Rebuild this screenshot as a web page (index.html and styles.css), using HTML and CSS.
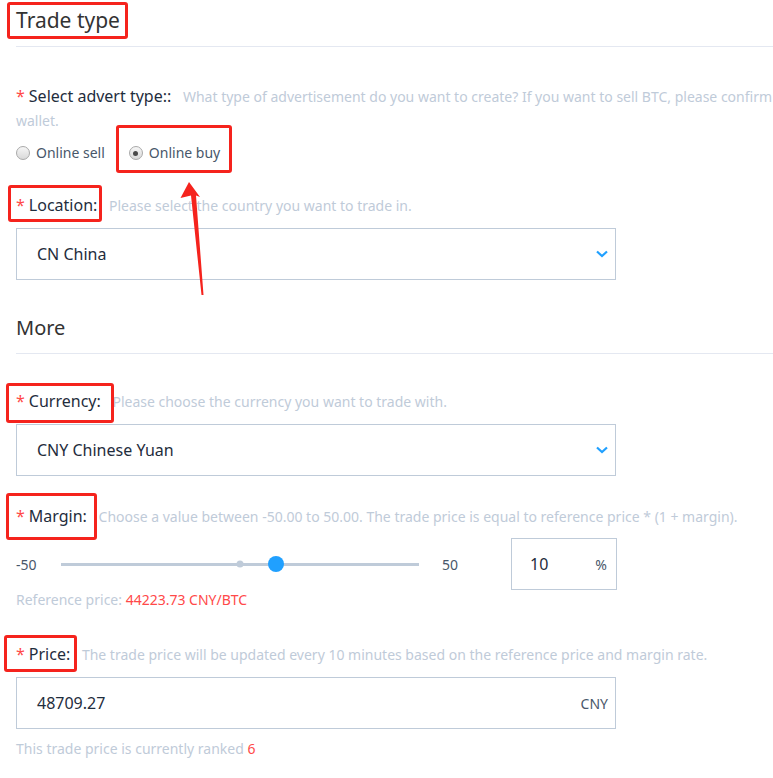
FILE: index.html
```html
<!DOCTYPE html>
<html lang="en">
<head>
    <meta charset="UTF-8">
    <meta name="viewport" content="width=device-width, initial-scale=1.0">
    <title>Create Advert</title>
    <link rel="stylesheet" href="styles.css">
</head>
<body>
    <div class="page">
        <div class="section-title">Trade type</div>

        <div class="form-item first">
            <div class="item-head">
                <span class="label"><i class="req">*</i>Select advert type::</span>
                <span class="hint">What type of advertisement do you want to create? If you want to sell BTC, please confirm that you have enough BTC in your<br>wallet.</span>
            </div>
            <div class="radios">
                <label class="radio"><span class="radio-dot"></span>Online sell</label>
                <label class="radio"><span class="radio-dot checked"></span>Online buy</label>
            </div>
        </div>

        <div class="form-item">
            <div class="item-head">
                <span class="label"><i class="req">*</i>Location:</span>
                <span class="hint">Please select the country you want to trade in.</span>
            </div>
            <div class="field">
                <span>CN China</span>
                <svg class="chevron" width="12" height="8" viewBox="0 0 12 8"><path d="M1 1.5 L6 6 L11 1.5" fill="none" stroke="#20a0ff" stroke-width="2.2"/></svg>
            </div>
        </div>

        <div class="section-title more">More</div>

        <div class="form-item after-title">
            <div class="item-head">
                <span class="label"><i class="req">*</i>Currency:</span>
                <span class="hint">Please choose the currency you want to trade with.</span>
            </div>
            <div class="field">
                <span>CNY Chinese Yuan</span>
                <svg class="chevron" width="12" height="8" viewBox="0 0 12 8"><path d="M1 1.5 L6 6 L11 1.5" fill="none" stroke="#20a0ff" stroke-width="2.2"/></svg>
            </div>
        </div>

        <div class="form-item">
            <div class="item-head">
                <span class="label"><i class="req">*</i>Margin:</span>
                <span class="hint">Choose a value between -50.00 to 50.00. The trade price is equal to reference price * (1 + margin).</span>
            </div>
            <div class="slider-row">
                <span class="slider-min">-50</span>
                <div class="track">
                    <span class="stop"></span>
                    <span class="thumb" style="left: 60%"></span>
                </div>
                <span class="slider-max">50</span>
                <div class="num-box">
                    <span class="num">10</span>
                    <span class="unit">%</span>
                </div>
            </div>
            <div class="note">Reference price: <span class="red">44223.73 CNY/BTC</span></div>
        </div>

        <div class="form-item price-item">
            <div class="item-head">
                <span class="label"><i class="req">*</i>Price:</span>
                <span class="hint">The trade price will be updated every 10 minutes based on the reference price and margin rate.</span>
            </div>
            <div class="field">
                <span>48709.27</span>
                <span class="unit">CNY</span>
            </div>
            <div class="note ranked">This trade price is currently ranked <span class="red">6</span></div>
        </div>

        <!-- annotation marks -->
        <div class="mark mark-title"></div>
        <div class="mark mark-buy"></div>
        <div class="mark mark-location"></div>
        <div class="mark mark-currency"></div>
        <div class="mark mark-margin"></div>
        <div class="mark mark-price"></div>
        <svg class="arrow" width="30" height="120" viewBox="0 0 30 120">
            <polygon points="11,2 22,17 18,15.5 25.5,115 23.5,115 13,15.5 2.5,18" fill="#f5231d"/>
        </svg>
    </div>
</body>
</html>
```

FILE: styles.css
```css
html, body {
    margin: 0;
    overflow: hidden;
}
body {
    font-family: "Noto Sans", "Noto Sans CJK SC", sans-serif;
    color: #1f2d3d;
    background: #fff;
}
.page {
    position: relative;
    width: 1100px;
    padding-left: 16px;
}
.section-title {
    font-size: 21px;
    line-height: 40px;
    padding-bottom: 6px;
    border-bottom: 1px solid #e4e8f1;
    color: #333;
}
.section-title.more {
    margin-top: 28px;
    font-size: 20px;
    padding-bottom: 5px;
}
.form-item {
    margin-top: 29px;
}
.form-item.first {
    margin-top: 38px;
}
.form-item.after-title {
    margin-top: 36px;
}
.form-item.price-item {
    margin-top: 33px;
}
.item-head {
    font-size: 14px;
    line-height: 24px;
}
.label {
    font-size: 16px;
    line-height: 1;
    color: #1f2d3d;
    padding-right: 8px;
}
.req {
    font-style: normal;
    color: #ff4949;
    margin-right: 4px;
}
.hint {
    color: #bfcbd9;
}
.radios {
    display: flex;
    gap: 24px;
    margin-top: 8px;
    font-size: 14px;
    line-height: 24px;
    color: #48576a;
}
.radio {
    display: flex;
    align-items: center;
    gap: 6px;
}
.radio-dot {
    position: relative;
    width: 14px;
    height: 14px;
    box-sizing: border-box;
    border-radius: 50%;
    border: 1px solid #a9a9a9;
    background: linear-gradient(#f6f6f6, #d9d9d9);
}
.radio-dot.checked::after {
    content: "";
    position: absolute;
    top: 3.5px;
    left: 3.5px;
    width: 5px;
    height: 5px;
    border-radius: 50%;
    background: #4a4a4a;
}
.field {
    width: 600px;
    height: 52px;
    box-sizing: border-box;
    margin-top: 10px;
    padding: 0 7px 0 20px;
    border: 1px solid #bfcbd9;
    display: flex;
    align-items: center;
    justify-content: space-between;
    font-size: 16px;
}
.unit {
    font-size: 14px;
    color: #48576a;
}
.slider-row {
    display: flex;
    align-items: center;
    height: 52px;
    margin-top: 9px;
    font-size: 14px;
    color: #48576a;
}
.slider-min {
    width: 45px;
}
.track {
    position: relative;
    width: 358px;
    height: 3px;
    background: #bfcbd9;
}
.stop, .thumb {
    position: absolute;
    top: 50%;
    border-radius: 50%;
    transform: translate(-50%, -50%);
}
.stop {
    left: 50%;
    width: 7px;
    height: 7px;
    background: #bfcbd9;
}
.thumb {
    width: 16px;
    height: 16px;
    background: #20a0ff;
}
.slider-max {
    width: 69px;
    margin-left: 23px;
}
.num-box {
    width: 106px;
    height: 52px;
    box-sizing: border-box;
    padding: 0 9px 0 18px;
    border: 1px solid #bfcbd9;
    display: flex;
    align-items: center;
    justify-content: space-between;
}
.num {
    font-size: 16px;
    color: #1f2d3d;
}
.note {
    font-size: 14px;
    line-height: 20px;
    color: #bfcbd9;
}
.note.ranked {
    margin-top: 10px;
}
.red {
    color: #ff4949;
}
.mark {
    position: absolute;
    box-sizing: border-box;
    border: 3px solid #f5231d;
    border-radius: 3px;
}
.mark-title { left: 7px; top: 2px; width: 121px; height: 37px; }
.mark-buy { left: 116px; top: 125px; width: 116px; height: 48px; }
.mark-location { left: 8px; top: 185px; width: 94px; height: 37px; }
.mark-currency { left: 6px; top: 383px; width: 108px; height: 40px; }
.mark-margin { left: 6px; top: 493px; width: 91px; height: 47px; }
.mark-price { left: 4px; top: 635px; width: 73px; height: 37px; }
.arrow {
    position: absolute;
    left: 178px;
    top: 180px;
}
```
